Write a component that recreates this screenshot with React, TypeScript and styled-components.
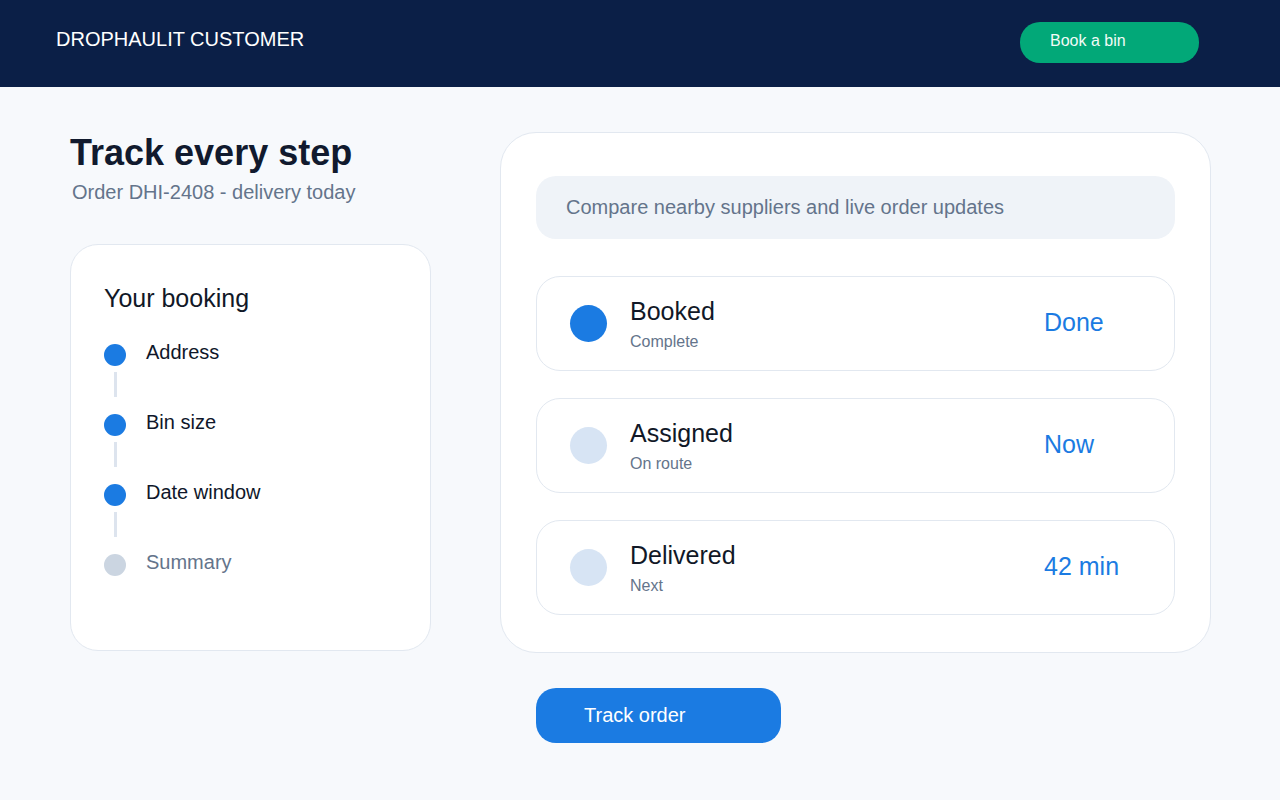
import React from "react";
import styled, { createGlobalStyle } from "styled-components";

const GlobalStyle = createGlobalStyle`
  html, body {
    margin: 0;
    padding: 0;
    background: #f7f9fc;
    font-family: "Liberation Sans", Arial, sans-serif;
  }
  * { box-sizing: border-box; }
`;

const Page = styled.div`
  min-height: 800px;
  background: #f7f9fc;
`;

const Header = styled.header`
  height: 87px;
  background: #0b1f47;
  display: flex;
  align-items: flex-start;
  justify-content: space-between;
  padding: 22px 81px 0 56px;
`;

const Brand = styled.div`
  margin-top: 5px;
  font-size: 20px;
  line-height: 24px;
  color: #ffffff;
`;

const BookButton = styled.button`
  width: 179px;
  height: 41px;
  border: none;
  border-radius: 20px;
  background: #02a878;
  color: #f2fbf7;
  font-family: inherit;
  font-size: 16px;
  line-height: 18px;
  text-align: left;
  padding: 0 0 4px 30px;
  cursor: pointer;
`;

const Main = styled.main`
  display: grid;
  grid-template-columns: 361px 711px;
  column-gap: 69px;
  padding: 45px 69px 0 70px;
`;

const Column = styled.div`
  display: flex;
  flex-direction: column;
  align-items: flex-start;
`;

const Title = styled.h1`
  margin: 0;
  font-size: 36px;
  line-height: 42px;
  font-weight: 700;
  color: #111a2e;
`;

const Subtitle = styled.p`
  margin: 6px 0 0 2px;
  font-size: 20px;
  line-height: 24px;
  color: #64748b;
`;

const BookingCard = styled.section`
  margin-top: 40px;
  width: 361px;
  height: 407px;
  background: #ffffff;
  border: 1px solid #e2e8f0;
  border-radius: 28px;
  padding: 39px 33px 0;
`;

const CardHeading = styled.h2`
  margin: 0 0 32px;
  font-size: 25px;
  line-height: 28px;
  font-weight: 400;
  color: #111827;
`;

const StepList = styled.div`
  display: flex;
  flex-direction: column;
  gap: 17px;
`;

const Step = styled.div`
  display: grid;
  grid-template-columns: 22px 1fr;
  column-gap: 20px;
`;

const Marker = styled.div`
  display: flex;
  flex-direction: column;
  align-items: center;
`;

const Dot = styled.div<{ $done: boolean }>`
  width: 22px;
  height: 22px;
  border-radius: 50%;
  background: ${(p) => (p.$done ? "#1b7be2" : "#cbd5e1")};
`;

const Connector = styled.div`
  width: 3px;
  height: 25px;
  margin-top: 6px;
  background: #dde4ee;
`;

const StepLabel = styled.span<{ $done: boolean }>`
  font-size: 20px;
  line-height: 18px;
  margin-top: -1px;
  color: ${(p) => (p.$done ? "#0f172a" : "#64748b")};
`;

const TrackCard = styled.section`
  width: 711px;
  height: 521px;
  background: #ffffff;
  border: 1px solid #e2e8f0;
  border-radius: 36px;
  padding: 43px 35px 0;
  display: flex;
  flex-direction: column;
`;

const InfoBar = styled.div`
  height: 63px;
  border-radius: 20px;
  background: #eff3f8;
  display: flex;
  align-items: center;
  padding: 0 30px;
  font-size: 20px;
  color: #64748b;
`;

const StatusList = styled.div`
  margin-top: 37px;
  display: flex;
  flex-direction: column;
  gap: 27px;
`;

const StatusRow = styled.div`
  height: 95px;
  border: 1px solid #e2e8f0;
  border-radius: 24px;
  display: flex;
  align-items: center;
  padding: 0 30px 0 33px;
`;

const StatusDot = styled.div<{ $active: boolean }>`
  width: 37px;
  height: 37px;
  flex: none;
  border-radius: 50%;
  background: ${(p) => (p.$active ? "#1b7be2" : "#d7e4f4")};
`;

const StatusText = styled.div`
  flex: 1;
  margin-left: 23px;
  display: flex;
  flex-direction: column;
  margin-top: 1px;
`;

const StatusTitle = styled.span`
  font-size: 25px;
  line-height: 28px;
  color: #111827;
`;

const StatusSub = styled.span`
  margin-top: 7px;
  font-size: 16px;
  line-height: 20px;
  color: #64748b;
`;

const StatusValue = styled.span`
  width: 100px;
  flex: none;
  margin-bottom: 4px;
  font-size: 25px;
  line-height: 28px;
  color: #1b7be2;
`;

const TrackButton = styled.button`
  margin: 35px 0 0 36px;
  width: 245px;
  height: 55px;
  border: none;
  border-radius: 20px;
  background: #1b7be2;
  color: #ffffff;
  font-family: inherit;
  font-size: 20px;
  text-align: left;
  padding: 0 0 0 48px;
  cursor: pointer;
`;

const steps = [
  { label: "Address", done: true },
  { label: "Bin size", done: true },
  { label: "Date window", done: true },
  { label: "Summary", done: false },
];

const statuses = [
  { title: "Booked", sub: "Complete", value: "Done", active: true },
  { title: "Assigned", sub: "On route", value: "Now", active: false },
  { title: "Delivered", sub: "Next", value: "42 min", active: false },
];

export default function App() {
  return (
    <Page>
      <GlobalStyle />
      <Header>
        <Brand>DROPHAULIT CUSTOMER</Brand>
        <BookButton>Book a bin</BookButton>
      </Header>
      <Main>
        <Column>
          <Title>Track every step</Title>
          <Subtitle>Order DHI-2408 - delivery today</Subtitle>
          <BookingCard>
            <CardHeading>Your booking</CardHeading>
            <StepList>
              {steps.map((s, i) => (
                <Step key={s.label}>
                  <Marker>
                    <Dot $done={s.done} />
                    {i < steps.length - 1 && <Connector />}
                  </Marker>
                  <StepLabel $done={s.done}>{s.label}</StepLabel>
                </Step>
              ))}
            </StepList>
          </BookingCard>
        </Column>
        <Column>
          <TrackCard>
            <InfoBar>Compare nearby suppliers and live order updates</InfoBar>
            <StatusList>
              {statuses.map((s) => (
                <StatusRow key={s.title}>
                  <StatusDot $active={s.active} />
                  <StatusText>
                    <StatusTitle>{s.title}</StatusTitle>
                    <StatusSub>{s.sub}</StatusSub>
                  </StatusText>
                  <StatusValue>{s.value}</StatusValue>
                </StatusRow>
              ))}
            </StatusList>
          </TrackCard>
          <TrackButton>Track order</TrackButton>
        </Column>
      </Main>
    </Page>
  );
}
